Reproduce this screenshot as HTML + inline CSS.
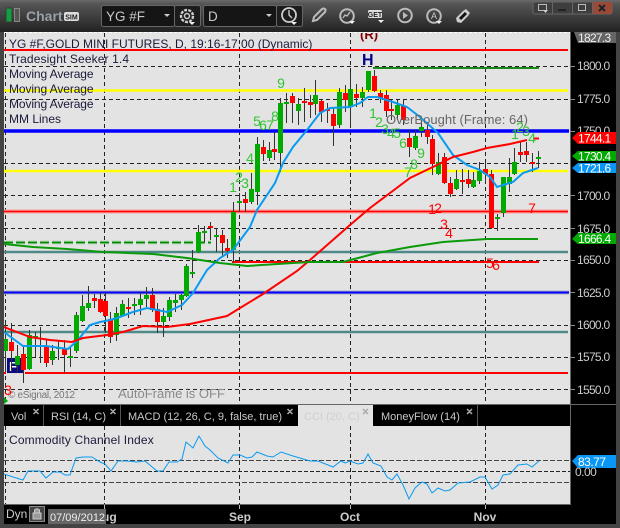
<!DOCTYPE html>
<html><head><meta charset="utf-8"><style>
html,body{margin:0;padding:0;background:#000;width:620px;height:528px;overflow:hidden}
svg{display:block;font-family:"Liberation Sans",sans-serif}
</style></head><body>
<svg width="620" height="528" viewBox="0 0 620 528" xmlns="http://www.w3.org/2000/svg">
<defs><linearGradient id="tb" x1="0" y1="0" x2="0" y2="1"><stop offset="0" stop-color="#6a6a6a"/><stop offset=".12" stop-color="#555"/><stop offset="1" stop-color="#222"/></linearGradient>
<clipPath id="cp"><rect x="4" y="33" width="566" height="371"/></clipPath></defs>
<rect width="620" height="528" fill="#000"/>
<rect x="0" y="0" width="620" height="32" fill="url(#tb)"/>
<rect x="0" y="32" width="4" height="496" fill="#444"/>
<rect x="616" y="32" width="4" height="496" fill="#444"/>
<rect x="0" y="524" width="620" height="4" fill="#444"/>
<!-- toolbar -->
<rect x="6" y="8" width="6" height="14" fill="#10a040" stroke="#3a3a3a"/>
<rect x="14.5" y="8.5" width="5" height="13" fill="#555" stroke="#888"/>
<text x="26" y="21" font-size="14" font-weight="bold" fill="#98a0a8">Chart</text>
<rect x="64" y="12" width="15" height="9" rx="2" fill="#ddd"/>
<text x="71.5" y="19.5" font-size="7" font-weight="bold" fill="#222" text-anchor="middle">SIM</text>
<rect x="101.5" y="5.5" width="73" height="21" rx="2" fill="#151515" stroke="#666"/>
<rect x="174.5" y="5.5" width="26" height="21" rx="2" fill="#1c1c1c" stroke="#666"/>
<text x="106" y="21" font-size="13.5" fill="#c8c8c8">YG #F</text>
<path d="M164 14h6l-3 3z" fill="#ccc"/>
<circle cx="187" cy="16" r="6" fill="none" stroke="#ccc" stroke-width="2.4" stroke-dasharray="3 1.2"/>
<circle cx="187" cy="16" r="2.5" fill="none" stroke="#ccc" stroke-width="1.5"/>
<path d="M189 22h6l-3 3z" fill="#eee"/>
<rect x="203.5" y="5.5" width="73" height="21" rx="2" fill="#151515" stroke="#666"/>
<rect x="276.5" y="5.5" width="26" height="21" rx="2" fill="#1c1c1c" stroke="#666"/>
<text x="208" y="21" font-size="13.5" fill="#c8c8c8">D</text>
<path d="M266 14h6l-3 3z" fill="#ccc"/>
<circle cx="289" cy="15" r="7" fill="none" stroke="#ccc" stroke-width="1.8"/>
<path d="M289 10v5l3 3" fill="none" stroke="#ccc" stroke-width="1.4"/>
<path d="M291 22h6l-3 3z" fill="#eee"/>
<path d="M313 21l1-4 8-8q2-1 3 0t0 3l-8 8z" fill="none" stroke="#bbb" stroke-width="2"/>
<circle cx="347" cy="16" r="6.8" fill="none" stroke="#bbb" stroke-width="2"/>
<path d="M343 18l2-3 2 1 3-4" fill="none" stroke="#bbb" stroke-width="1.4"/>
<path d="M349 21h6l-3 3z" fill="#eee"/>
<rect x="368" y="10" width="14" height="8" rx="1.5" fill="#ddd"/>
<text x="375" y="17" font-size="7" font-weight="bold" fill="#222" text-anchor="middle">GET</text>
<path d="M378 20h6l-3 3z" fill="#eee"/>
<circle cx="405" cy="15.5" r="6.8" fill="none" stroke="#bbb" stroke-width="2"/>
<path d="M403 12v7l5-3.500z" fill="#bbb"/>
<circle cx="434" cy="16" r="6.8" fill="none" stroke="#bbb" stroke-width="2"/>
<text x="434" y="19" font-size="9" fill="#ccc" text-anchor="middle">A</text>
<path d="M436 21h6l-3 3z" fill="#eee"/>
<path d="M456 18l7-7 3-2 4 4-2 3-7 7-4-1z" fill="#ccc"/>
<path d="M460 19l6-6" stroke="#111" stroke-width="3"/>
<!-- window buttons -->
<rect x="533" y="2" width="79" height="12" rx="2" fill="#3e3e3e" stroke="#666"/>
<rect x="593" y="2" width="19" height="12" fill="#9a4a38"/>
<path d="M552.500 2v12M572.500 2v12M592.500 2v12" stroke="#666"/>
<rect x="538.500" y="4.500" width="8" height="6" fill="none" stroke="#bbb"/>
<path d="M543 10h5l-2.500 3z" fill="#ccc"/>
<rect x="558" y="9" width="8" height="2" fill="#222"/>
<rect x="578.500" y="4.500" width="7" height="6" fill="none" stroke="#bbb"/>
<path d="M599 5l6 6m0-6l-6 6" stroke="#222" stroke-width="2"/>
<!-- main panel -->
<rect x="4" y="32" width="566" height="372" fill="#e3e3e3"/>
<path d="M4 32.500H570" stroke="#fff" stroke-dasharray="3 2"/>
<path d="M570.500 32V505M4 404.500H616" stroke="#666"/>
<g clip-path="url(#cp)">
<path d="M4 66.500H570M4 99.500H570M4 163.500H570M4 195.500H570M4 228.500H570M4 260.500H570M4 325.500H570M4 357.500H570M4 389.500H570M5.500 33V404M104.500 33V404M239.500 33V404M350.500 33V404M485.500 33V404" stroke="#222" stroke-dasharray="4 3"/>
<!-- levels -->
<path d="M4 50H568" stroke="#f00" stroke-width="2"/>
<path d="M4 90.500H568M4 171H568" stroke="#ff0" stroke-width="2.500"/>
<path d="M4 131H569" stroke="#00f" stroke-width="3.500"/>
<path d="M4 211.500H568" stroke="#f99" stroke-width="4"/>
<path d="M4 211.500H568" stroke="#f00" stroke-width="1.500"/>
<path d="M4 252H568M4 332H568" stroke="#4f8a8a" stroke-width="2.500"/>
<path d="M4 292.500H569" stroke="#aab" stroke-width="4"/>
<path d="M4 292.500H569" stroke="#00f" stroke-width="2"/>
<path d="M4 373H568" stroke="#f00" stroke-width="2"/>
<path d="M232 262H539" stroke="#f00" stroke-width="2"/>
<path d="M373 68H539" stroke="#1a8a1a" stroke-width="2"/>
<path d="M4 242.500H211" stroke="#9c9" stroke-width="3.500" stroke-dasharray="9 3"/>
<path d="M4 242.500H211" stroke="#080" stroke-width="1.500" stroke-dasharray="9 3"/>
<!-- F marker -->
<rect x="6.500" y="357.500" width="18" height="16" fill="#0a0a80" stroke="#ddd"/>
<text x="9" y="371" font-size="13" font-weight="bold" fill="#fff">F</text>
<!-- wicks -->
<path stroke="#333" fill="none" d="M5.500 322V372M11.500 323V372M17.500 345V372M23.500 347V383M29.500 330V370M35.500 332V357M40.500 327V363M46.500 340V367M52.500 345V365M58.500 341V360M64.500 340V373M70.500 346V367M76.500 312V353M82.500 295V322M88.500 286V311M94.500 294V308M100.500 293V313M105.500 293V333M110.500 312V343M116.500 307V341M122.500 300V317M128.500 298V318M134.500 298V315M140.500 292V315M146.500 287V307M152.500 288V312M157.500 303V333M163.500 308V337M169.500 297V321M175.500 294V312M181.500 294V310M186.500 264V297M192.500 250V278M198.500 225V253M204.500 226V242M210.500 222V240M216.500 228V252M222.500 230V256M227.500 239V258M233.500 202V262M239.500 193V212M245.500 192V212M251.500 173V204M257.500 137V205M263.500 140V161M269.500 142V161M274.500 132V160M280.500 98V172M286.500 93V123M292.500 93V123M298.500 98V125M304.500 88V122M310.500 95V118M315.500 80V115M321.500 100V122M327.500 103V123M333.500 108V146M339.500 88V128M345.500 85V112M350.500 72V127M356.500 84V107M362.500 87V107M368.500 71V92M374.500 70V92M380.500 90V103M386.500 90V117M391.500 100V120M397.500 100V120M403.500 99V125M409.500 130V157M415.500 130V150M421.500 120V137M427.500 122V144M432.500 135V175M438.500 153V175M444.500 153V184M450.500 177V197M456.500 170V190M462.500 169V194M468.500 170V188M473.500 172V188M479.500 162V184M485.500 162V182M491.500 170V229M497.500 214V231M503.500 177V217M509.500 158V192M514.500 148V175M520.500 141V162M526.500 142V162M532.500 153V172M538.500 151V168"/>
<!-- green bodies -->
<path stroke="#00aa00" stroke-width="5" fill="none" d="M5.500 339V351M17.500 356V365M29.500 335V369M35.500 336V338M52.500 351V360M58.500 347V349M70.500 356V358M76.500 315V351M82.500 306V321M88.500 303V308M116.500 313V335M122.500 304V316M134.500 304V306M140.500 299V305M146.500 295V299M163.500 316V322M169.500 300V317M175.500 300V303M181.500 295V300M186.500 266V296M192.500 272V274M198.500 232V252M204.500 231V233M216.500 235V237M233.500 212V250M239.500 201V203M251.500 189V202M257.500 144V192M269.500 150V158M280.500 103V153M286.500 102V104M298.500 104V111M315.500 95V104M339.500 92V125M350.500 89V107M362.500 92V98M368.500 71V90M397.500 105V115M415.500 136V148M421.500 127V131M438.500 162V174M456.500 179V189M473.500 180V187M479.500 171V181M497.500 217V219M503.500 177V213M509.500 177V184M514.500 162V174M538.500 157V159"/>
<!-- red bodies -->
<path stroke="#ff0000" stroke-width="5" fill="none" d="M11.500 342V351M23.500 354V370M46.500 347V363M64.500 349V355M94.500 298V301M100.500 299V312M105.500 301V316M110.500 319V337M128.500 307V309M152.500 295V310M157.500 309V322M210.500 226V228M222.500 235V243M227.500 248V251M245.500 199V203M263.500 147V154M274.500 149V152M292.500 96V103M304.500 101V103M310.500 102V105M321.500 101V112M327.500 109V111M333.500 114V126M345.500 93V100M356.500 94V98M374.500 76V91M380.500 93V98M386.500 95V111M391.500 109V111M403.500 106V120M409.500 138V147M427.500 130V137M432.500 139V164M444.500 157V183M450.500 183V194M462.500 180V182M468.500 179V184M485.500 169V174M491.500 174V228M520.500 152V155M526.500 151V155M532.500 162V164"/>
<!-- MAs -->
<polyline fill="none" stroke="#0a9bf0" stroke-width="2" points="4,332 23,346 46,346 68,349 78,340 90,325 100,322 110,320 117,318 133,312 147,308 167,312 182,305 193,293 207,270 220,258 233,250 250,227 257,210 275,183 283,163 293,147 307,130 320,113 330,108 350,107 360,103 368,97 377,97 393,102 407,107 420,117 438,133 453,155 467,165 480,170 490,177 497,187 503,185 513,182 523,173 538,168"/>
<polyline fill="none" stroke="#f00" stroke-width="2" points="4,327 30,337 50,340 72,342 83,338 107,335 123,332 143,326 167,327 190,324 227,316 240,308 263,294 297,271 310,260 350,225 370,208 390,193 410,178 437,165 453,157 473,152 487,148 510,144 527,140"/>
<path d="M534 138.500h5" stroke="#f00" stroke-width="2"/>
<polyline fill="none" stroke="#0a9a0a" stroke-width="2" points="4,244 33,247 67,249 103,252 153,254 187,258 220,263 247,266 293,263 310,262 343,262 377,253 410,247 443,242 487,239 538,239"/>
<!-- labels -->
<g font-size="12" fill="#1a1a3a">
<text x="9" y="48">YG #F,GOLD MINI FUTURES, D, 19:16-17:00 (Dynamic)</text>
<text x="9" y="63" letter-spacing=".12">Tradesight Seeker 1.4</text>
<text x="9" y="78" letter-spacing="-.1">Moving Average</text>
<text x="9" y="93" letter-spacing="-.1">Moving Average</text>
<text x="9" y="108" letter-spacing="-.1">Moving Average</text>
<text x="9" y="123">MM Lines</text>
</g>
<text x="360" y="39" font-size="13" font-weight="bold" fill="#800000">(R)</text>
<text x="362" y="65" font-size="16" font-weight="bold" fill="#00008b">H</text>
<text x="386" y="124" font-size="13" letter-spacing=".05" fill="#666">OverBought (Frame: 64)</text>
<text x="118" y="398" font-size="13" fill="#8a8a8a">AutoFrame is OFF</text>
<text x="8" y="398" font-size="10" letter-spacing="-.3" fill="#777">© eSignal, 2012</text>
<g font-size="14" fill="#33c433" text-anchor="middle">
<text x="257" y="126">5</text><text x="263" y="130">6</text><text x="270" y="130">7</text><text x="275" y="121">8</text><text x="281" y="88">9</text>
<text x="233" y="192">1</text><text x="239" y="182">2</text><text x="245" y="188">3</text><text x="250" y="163">4</text>
<text x="373" y="118">1</text><text x="379" y="127">2</text><text x="385" y="134">3</text><text x="391" y="138">4</text><text x="397" y="138">5</text><text x="403" y="148">6</text><text x="408" y="177">7</text><text x="414" y="169">8</text><text x="421" y="158">9</text>
<text x="515" y="139">1</text><text x="520" y="132">2</text><text x="526" y="136">3</text><text x="532" y="143">4</text>
</g>
<g font-size="14" fill="#f00" text-anchor="middle">
<text x="432" y="214">1</text><text x="438" y="213">2</text><text x="444" y="229">3</text><text x="449" y="238">4</text><text x="490" y="268">5</text><text x="496" y="270">6</text><text x="532" y="213">7</text><text x="8" y="395">3</text>
</g>
<path d="M4 397l4 4-4 3z" fill="#0a0"/>
</g>
<!-- right axis -->
<g font-size="12" fill="#ccc" letter-spacing="-.7">
<text x="577" y="70">1800.0</text><text x="577" y="103">1775.0</text><text x="577" y="135">1750.0</text><text x="577" y="200">1700.0</text><text x="577" y="233">1675.0</text><text x="577" y="264">1650.0</text><text x="577" y="297">1625.0</text><text x="577" y="329">1600.0</text><text x="577" y="361">1575.0</text><text x="577" y="394">1550.0</text>
</g>
<path d="M570 66.500h5M570 99.500h5M570 131.500h5M570 195.500h5M570 228.500h5M570 260.500h5M570 292.500h5M570 325.500h5M570 357.500h5M570 389.500h5" stroke="#888"/>
<g font-size="12" letter-spacing="-.7">
<path d="M574 32H616V43H578z" fill="#666"/><text x="578" y="42" fill="#eee">1827.3</text>
<path d="M572 138l6-6H616V144H578z" fill="#f00"/><text x="578" y="142.500" fill="#fff">1744.1</text>
<path d="M572 156l6-5H616V161H578z" fill="#0a0"/><text x="578" y="160.500" fill="#fff">1730.4</text>
<path d="M572 168l6-5H616V173H578z" fill="#0a96f5"/><text x="578" y="172.500" fill="#fff">1721.6</text>
<path d="M572 239l6-6H616V244H578z" fill="#0a0"/><text x="578" y="243" fill="#fff">1666.4</text>
</g>
<!-- lower panel -->
<rect x="4" y="405" width="566" height="99" fill="#e3e3e3"/>
<path d="M4 504.500H570" stroke="#666"/>
<path d="M5.500 426V504M104.500 405V504M239.500 426V510M350.500 426V510M485.500 426V510" stroke="#222" stroke-dasharray="4 3"/>
<path d="M4 460.500H570M4 482.500H570" stroke="#444" stroke-dasharray="5 2"/>
<path d="M4 471.500H570" stroke="#222" stroke-dasharray="4 2"/>
<rect x="4" y="405" width="566" height="21" fill="#000"/>
<rect x="298" y="405" width="75" height="21" fill="#e3e3e3"/>
<path d="M43.500 405v21M120.500 405v21M477.500 405v21" stroke="#555"/>
<g font-size="11" fill="#c8c8c8">
<text x="11" y="420">Vol</text>
<text x="51" y="420">RSI (14, C)</text>
<text x="128" y="420">MACD (12, 26, C, 9, false, true)</text>
<text x="304" y="420" fill="#cfcfcf">CCI (20, C)</text>
<text x="381" y="420">MoneyFlow (14)</text>
</g>
<g stroke="#aaa" stroke-width="1.500"><path d="M33.500 409l5 5m0-5l-5 5M110.500 409l5 5m0-5l-5 5M287.500 409l5 5m0-5l-5 5M363 409l5 5m0-5l-5 5M467 409l5 5m0-5l-5 5"/></g>
<text x="9" y="444" font-size="12" fill="#1a1a3a" letter-spacing=".15">Commodity Channel Index</text>
<polyline fill="none" stroke="#0a9bf0" stroke-width="1" points="4,474 13,477 23,480 28,471 40,471 46,478 53,472 60,472 65,475 70,475 76,458 83,457 92,457 100,462 105,464 111,471 118,461 127,461 137,462 145,461 157,471 163,471 169,462 177,462 182,459 186,442 193,448 199,436 205,446 210,450 218,458 228,463 233,455 240,455 247,458 252,457 257,452 267,456 273,457 281,452 293,456 310,461 318,461 333,467 341,461 345,463 350,461 358,464 363,463 368,454 373,463 381,466 387,477 392,480 397,474 403,485 409,499 415,488 422,482 427,484 432,493 438,488 445,491 450,490 458,483 470,482 480,477 485,477 492,489 498,485 503,475 510,474 518,465 527,464 532,467 539,461"/>
<path d="M572 461l6-6H616V468H578z" fill="#0a96f5"/><text x="578" y="466" font-size="12" letter-spacing="-.5" fill="#fff">83.77</text>
<text x="575" y="476" font-size="12" letter-spacing="-.5" fill="#ccc">0.00</text>
<!-- footer -->
<rect x="4" y="505" width="566" height="19" fill="#000"/>
<path d="M104.500 505v4M239.500 505v4M350.500 505v4M485.500 505v4" stroke="#bbb"/>
<g font-size="12" font-weight="bold" fill="#ccc" text-anchor="middle">
<text x="105" y="521">Aug</text><text x="240" y="521">Sep</text><text x="350" y="521">Oct</text><text x="485" y="521">Nov</text>
</g>
<text x="6" y="518" font-size="12" fill="#ccc">Dyn</text>
<rect x="29.500" y="506.500" width="15" height="15" fill="#444" stroke="#888"/>
<path d="M33 519v-6h8v6zM34.500 513v-3q2.500-2.500 5 0v3" fill="#999" stroke="#ccc"/>
<rect x="48" y="509" width="58" height="15" fill="#666"/>
<text x="50" y="521" font-size="11" fill="#eee">07/09/2012</text>
</svg>
</body></html>
